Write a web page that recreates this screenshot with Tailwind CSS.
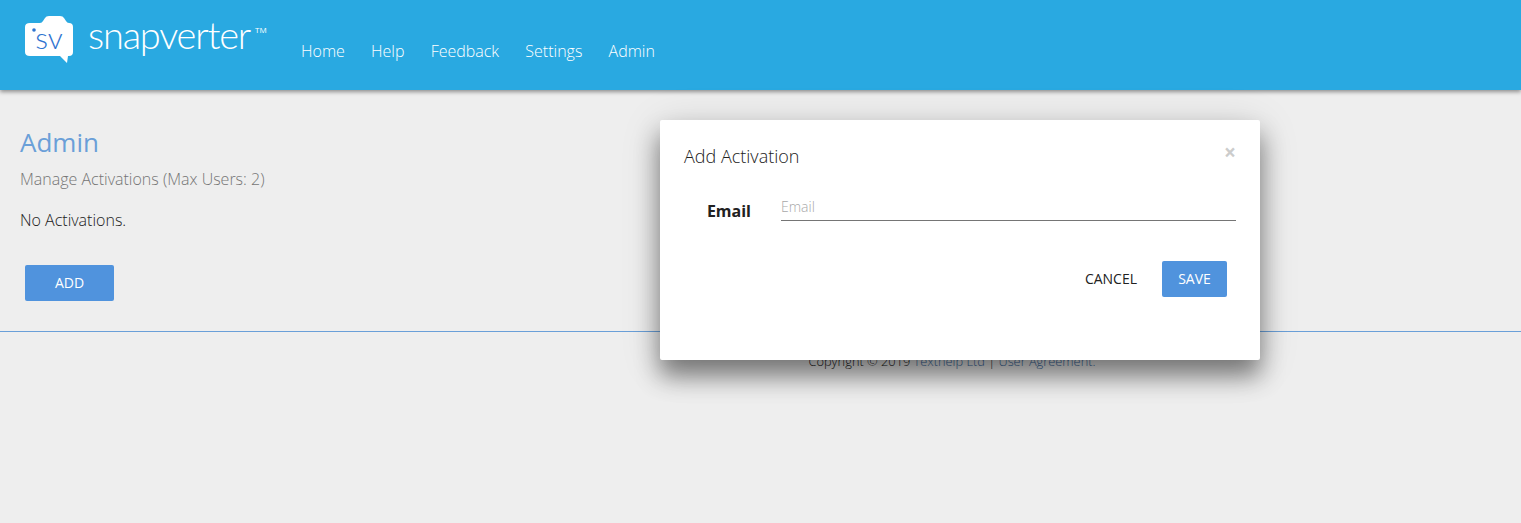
<!DOCTYPE html>
<html lang="en">
  <head>
    <meta charset="UTF-8" />
    <title>Snapverter Admin</title>
    <script src="https://cdn.jsdelivr.net/npm/@tailwindcss/browser@4"></script>
  </head>
  <body class="relative h-[523px] overflow-hidden bg-[#eeeeee] font-['Open_Sans',sans-serif] font-light text-[#212121]">
    <!-- Header -->
    <header class="flex h-[90px] bg-[#29a9e1] shadow-[0_2px_4px_rgba(0,0,0,0.4)]">
      <div class="flex h-[78px] w-[301px] shrink-0 items-center pl-[25px] text-white">
        <svg class="h-[48px] w-[48px] shrink-0" viewBox="0 0 48 48">
          <path d="M5 8h10q2 0 3-2l2-3q1-2 4-2h11q3 0 4 2l2 3q1 2 3 2h0q4 0 4 4v25q0 4-4 4h-1l-1 7-7-7H5q-5 0-5-4V12q0-4 5-4z" fill="#fff" />
          <circle cx="9" cy="15" r="1.8" fill="#2f74d0" />
          <text x="24" y="34" text-anchor="middle" font-family="Lato, sans-serif" font-size="30" fill="#2f74d0">sv</text>
        </svg>
        <span class="ml-[15px] pb-[10px] font-['Lato',sans-serif] text-[38px] leading-none font-light tracking-[-1.2px]">snapverter</span>
        <span class="mb-[18px] ml-[5px] text-[8px] leading-none font-normal">TM</span>
      </div>
      <nav class="flex h-[102px] items-center gap-[26.2px] text-[16px] text-white">
        <a>Home</a>
        <a>Help</a>
        <a>Feedback</a>
        <a>Settings</a>
        <a>Admin</a>
      </nav>
    </header>

    <!-- Page -->
    <main class="px-[20px] pt-[35px]">
      <h1 class="text-[26px] leading-[34px] font-normal text-[#6a9fd8]">Admin</h1>
      <p class="mt-[9px] text-[16px] leading-[22px] text-[#757575]">Manage Activations (Max Users: 2)</p>
      <p class="mt-[19px] text-[16px] leading-[22px]">No Activations.</p>
      <button class="mt-[34px] ml-[5px] h-[36px] w-[89px] rounded-[2px] bg-[#5093dd] pb-[1px] text-[14px] font-normal text-white">ADD</button>
    </main>
    <footer class="mt-[30px] border-t border-[#6a9fd8] pt-[20px] pl-[383px] text-center text-[12.8px] leading-[19px]">
      Copyright © 2019 <a class="text-[#3f6fa8]">Texthelp Ltd</a> | <a class="text-[#3f6fa8]">User Agreement.</a>
    </footer>

    <!-- Modal -->
    <div class="absolute top-[120px] left-[660px] h-[240px] w-[600px] rounded-[2px] bg-white px-[24px] pt-[24px] shadow-[0_16px_24px_rgba(0,0,0,0.45),0_6px_40px_rgba(0,0,0,0.15)]">
      <div class="flex items-start justify-between">
        <h2 class="text-[18px] leading-[24px]">Add Activation</h2>
        <span class="text-[21px] leading-[17px] font-bold text-[#cccccc]">×</span>
      </div>
      <div class="mt-[26px] flex items-end">
        <label class="-mb-[2px] w-[67px] text-right text-[16px] leading-[24px] font-bold">Email</label>
        <input class="ml-[30px] h-[27px] flex-1 border-b border-[#757575] pb-[2px] text-[14px] placeholder:text-[#a8a8a8]" placeholder="Email" />
      </div>
      <div class="mt-[40px] flex items-center justify-end pr-[9px]">
        <button class="mr-[25px] mb-[2px] text-[14px] font-normal">CANCEL</button>
        <button class="h-[36px] w-[65px] rounded-[2px] bg-[#5093dd] pb-[1px] text-[14px] font-normal text-white">SAVE</button>
      </div>
    </div>
  </body>
</html>
